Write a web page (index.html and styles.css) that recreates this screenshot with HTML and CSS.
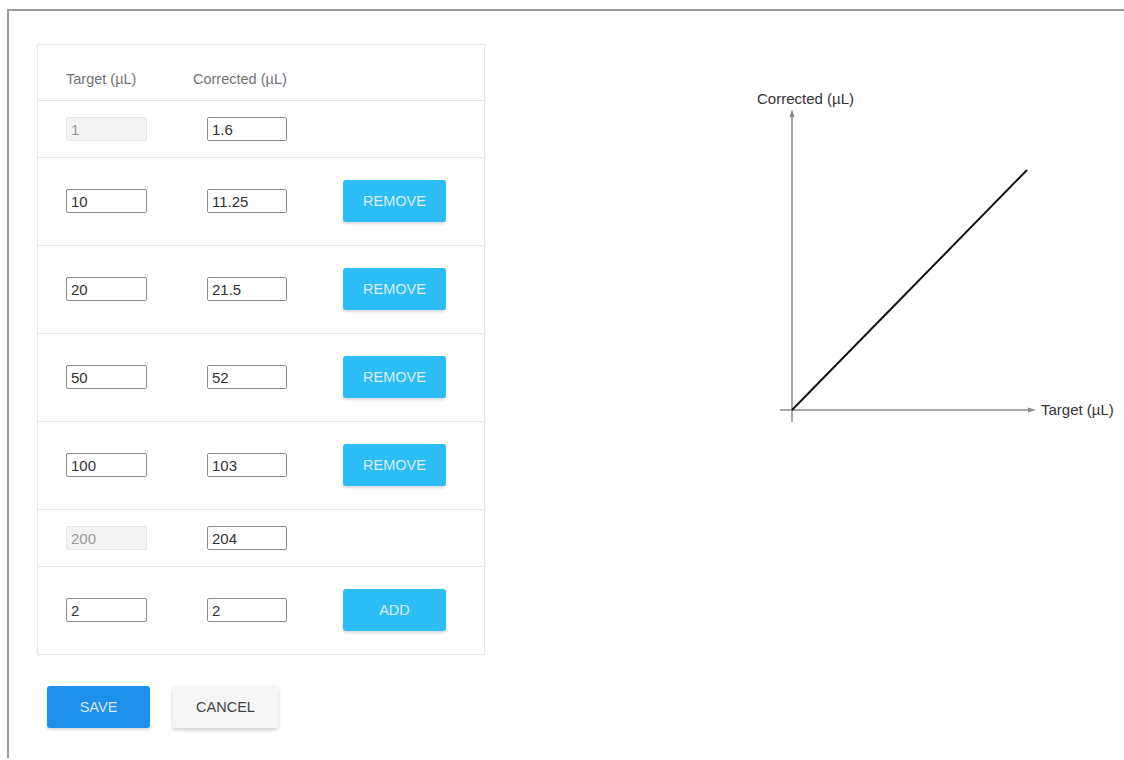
FILE: index.html
```html
<!DOCTYPE html>
<html lang="en">
<head>
    <meta charset="UTF-8">
    <title>Calibration</title>
    <link rel="stylesheet" href="styles.css">
</head>
<body>

    <div class="frame">
        <div class="editor">
            <div class="card">
                <div class="row head">
                    <span>Target (µL)</span>
                    <span>Corrected (µL)</span>
                </div>
                <div class="row">
                    <input type="text" value="1" disabled>
                    <input type="text" class="second" value="1.6">
                </div>
                <div class="row tall">
                    <input type="text" value="10">
                    <input type="text" class="second" value="11.25">
                    <button class="btn light">REMOVE</button>
                </div>
                <div class="row tall">
                    <input type="text" value="20">
                    <input type="text" class="second" value="21.5">
                    <button class="btn light">REMOVE</button>
                </div>
                <div class="row tall">
                    <input type="text" value="50">
                    <input type="text" class="second" value="52">
                    <button class="btn light">REMOVE</button>
                </div>
                <div class="row tall">
                    <input type="text" value="100">
                    <input type="text" class="second" value="103">
                    <button class="btn light">REMOVE</button>
                </div>
                <div class="row">
                    <input type="text" value="200" disabled>
                    <input type="text" class="second" value="204">
                </div>
                <div class="row tall last">
                    <input type="text" value="2">
                    <input type="text" class="second" value="2">
                    <button class="btn light">ADD</button>
                </div>
            </div>

            <div class="actions">
                <button class="btn primary">SAVE</button>
                <button class="btn plain">CANCEL</button>
            </div>
        </div>

        <div class="chart">
            <svg width="380" height="350" viewBox="0 0 380 350">
                <!-- axes -->
                <line x1="48" y1="33" x2="48" y2="342" stroke="#8a8a8a" stroke-width="1.5"/>
                <polygon points="48,29 45.5,37 50.5,37" fill="#8a8a8a"/>
                <line x1="36" y1="330" x2="286" y2="330" stroke="#8a8a8a" stroke-width="1.5"/>
                <polygon points="292,330 284,327.5 284,332.5" fill="#8a8a8a"/>
                <!-- curve -->
                <line x1="48" y1="330" x2="283" y2="90" stroke="#111" stroke-width="2"/>
                <text x="13" y="24" class="axis-label">Corrected (µL)</text>
                <text x="297" y="335" class="axis-label">Target (µL)</text>
            </svg>
        </div>
    </div>

</body>
</html>
```

FILE: styles.css
```css
body {
    margin: 0;
    font-family: "Liberation Sans", Arial, sans-serif;
    background: #fff;
    color: #333;
}
.frame {
    margin: 9px 0 0 7px;
    border-top: 2px solid #9a9a9a;
    border-left: 2px solid #9a9a9a;
    padding: 33px 0 0 28px;
    height: 749px;
    box-sizing: border-box;
    display: flex;
    align-items: flex-start;
}
.editor {
    width: 449px;
}
.card {
    border: 1px solid #e6e6e6;
    box-shadow: 0 0 3px rgba(0,0,0,0.06);
    background: #fff;
}
.row {
    display: grid;
    grid-template-columns: 127px 150px auto;
    align-items: center;
    padding: 16px 28px;
    border-bottom: 1px solid #e6e6e6;
}
.row.tall {
    padding: 22px 28px 23px;
}
.row.last {
    border-bottom: none;
}
.row.head {
    height: 56px;
    padding: 0 28px;
    box-sizing: border-box;
    font-size: 14.5px;
    color: #727272;
}
.row.head span {
    position: relative;
    top: 6px;
}
input[type="text"] {
    width: 81px;
    height: 24px;
    box-sizing: border-box;
    padding: 1px 4px;
    font-family: "Liberation Sans", Arial, sans-serif;
    font-size: 15px;
    color: #333;
    border: 1px solid #8c8c8c;
    border-radius: 2px;
    background: #fff;
}
input[disabled] {
    background: #f3f3f3;
    border-color: #e4e4e4;
    color: #9a9a9a;
}
input.second {
    margin-left: 14px;
    width: 80px;
}
.btn {
    width: 103px;
    height: 42px;
    border: none;
    border-radius: 3px;
    font-family: "Liberation Sans", Arial, sans-serif;
    font-size: 14.5px;
    cursor: pointer;
}
.btn.light {
    background-color: #2cbcf6;
    color: rgba(255,255,255,0.82);
    box-shadow: 0 2px 3px rgba(0,0,0,0.15);
}
.btn.primary {
    background-color: #1e90ec;
    color: rgba(255,255,255,0.82);
    box-shadow: 0 2px 3px rgba(0,0,0,0.15);
}
.btn.plain {
    width: 105px;
    background-color: #f6f6f6;
    color: #444;
    box-shadow: 0 2px 4px rgba(0,0,0,0.2);
}
.actions {
    display: flex;
    gap: 23px;
    margin: 31px 0 0 10px;
}
.chart {
    margin: 36px 0 0 259px;
}
.axis-label {
    font-family: "Liberation Sans", Arial, sans-serif;
    font-size: 15px;
    fill: #333;
}
```
